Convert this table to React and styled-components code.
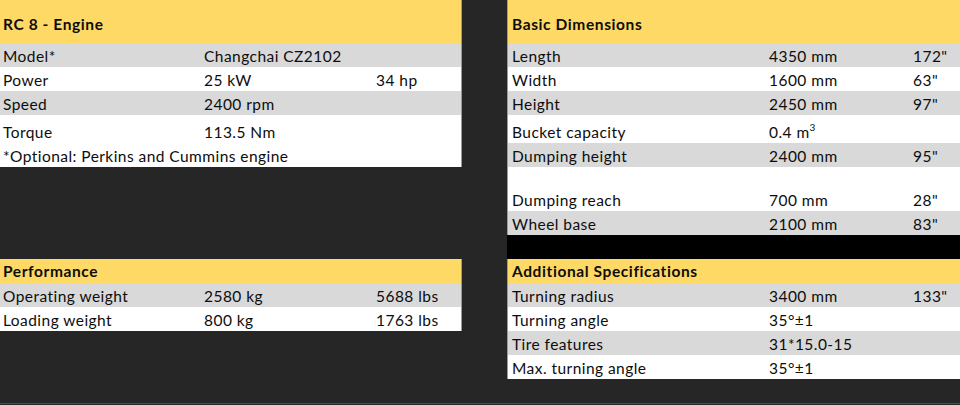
import styled, { createGlobalStyle } from 'styled-components';

const GlobalStyle = createGlobalStyle`
  body {
    margin: 0;
    background: #262626;
    font-family: Lato, "Liberation Sans", sans-serif;
    color: #000;
  }
`;

const engine = [
  { label: 'Model*', value: 'Changchai CZ2102', alt: '', shade: true },
  { label: 'Power', value: '25 kW', alt: '34 hp' },
  { label: 'Speed', value: '2400 rpm', alt: '', shade: true },
  { label: 'Torque', value: '113.5 Nm', alt: '', height: 28 },
];

const dimensions = [
  { label: 'Length', value: '4350 mm', alt: '172"', shade: true },
  { label: 'Width', value: '1600 mm', alt: '63"' },
  { label: 'Height', value: '2450 mm', alt: '97"', shade: true },
  { label: 'Bucket capacity', value: <>0.4 m<sup>3</sup></>, alt: '', height: 28 },
  { label: 'Dumping height', value: '2400 mm', alt: '95"', shade: true },
  { label: 'Dumping reach', value: '700 mm', alt: '28"', height: 44 },
  { label: 'Wheel base', value: '2100 mm', alt: '83"', shade: true },
];

const performance = [
  { label: 'Operating weight', value: '2580 kg', alt: '5688 lbs', shade: true },
  { label: 'Loading weight', value: '800 kg', alt: '1763 lbs' },
];

const additional = [
  { label: 'Turning radius', value: '3400 mm', alt: '133"', shade: true },
  { label: 'Turning angle', value: '35°±1', alt: '' },
  { label: 'Tire features', value: '31*15.0-15', alt: '', shade: true },
  { label: 'Max. turning angle', value: '35°±1', alt: '' },
];

const SpecTable = ({ title, rows, cols, headHeight = 24, note }) => (
  <Table side={cols.side}>
    <Head h={headHeight}>{title}</Head>
    {rows.map(r => (
      <Row key={r.label} shade={r.shade} h={r.height || 24} cols={cols.template}>
        <span>{r.label}</span>
        <span>{r.value}</span>
        <span>{r.alt}</span>
      </Row>
    ))}
    {note && <Note>{note}</Note>}
  </Table>
);

const leftCols = { template: '201px 172px 1fr', side: 'left' };
const rightCols = { template: '257px 144px 1fr', side: 'right' };

const App = () => {
  return (
    <>
      <GlobalStyle />
      <Page>
        <Cell>
          <SpecTable
            title="RC 8 - Engine"
            rows={engine}
            cols={leftCols}
            headHeight={43}
            note="*Optional: Perkins and Cummins engine"
          />
        </Cell>
        <Cell>
          <SpecTable title="Basic Dimensions" rows={dimensions} cols={rightCols} headHeight={43} />
          <BlackBar />
        </Cell>
        <Cell>
          <SpecTable title="Performance" rows={performance} cols={leftCols} />
        </Cell>
        <Cell>
          <SpecTable title="Additional Specifications" rows={additional} cols={rightCols} />
        </Cell>
      </Page>
    </>
  );
};

export default App;

const Page = styled.div`
  display: grid;
  grid-template-columns: 462px 1fr;
  grid-template-rows: 259px 144px;
  column-gap: 45px;
  height: 403px;
  border-bottom: 1px solid #4d4d4d;
`;

const Cell = styled.div`
  display: flex;
  flex-direction: column;
  align-items: stretch;
`;

const Table = styled.div`
  display: flex;
  flex-direction: column;
  background: #ffffff;
  border-right: ${p => (p.side === 'left' ? '1px solid #9a9a9a' : '0')};
  border-left: ${p => (p.side === 'right' ? '1px solid #9a9a9a' : '0')};
  padding-left: ${p => (p.side === 'right' ? '4px' : '3px')};
  font-size: 15.5px;
  letter-spacing: 0.45px;
  line-height: 18px;
  color: #0d0d0d;
`;

const Head = styled.div`
  display: flex;
  align-items: flex-end;
  height: ${p => p.h}px;
  padding-bottom: ${p => (p.h > 30 ? '10px' : '3px')};
  box-sizing: border-box;
  margin-left: -4px;
  padding-left: 4px;
  background: #ffd966;
  font-weight: 700;
  letter-spacing: 0.6px;
`;

const Row = styled.div`
  display: grid;
  grid-template-columns: ${p => p.cols};
  align-items: end;
  height: ${p => p.h}px;
  padding-bottom: 2px;
  box-sizing: border-box;
  margin-left: -4px;
  padding-left: 4px;
  background: ${p => (p.shade ? '#d9d9d9' : '#ffffff')};
  white-space: nowrap;

  sup {
    font-size: 10px;
    line-height: 0;
    vertical-align: 7px;
  }
`;

const Note = styled.div`
  height: 24px;
  display: flex;
  align-items: flex-end;
  padding-bottom: 2px;
  box-sizing: border-box;
`;

const BlackBar = styled.div`
  height: 24px;
  background: #000;
`;
